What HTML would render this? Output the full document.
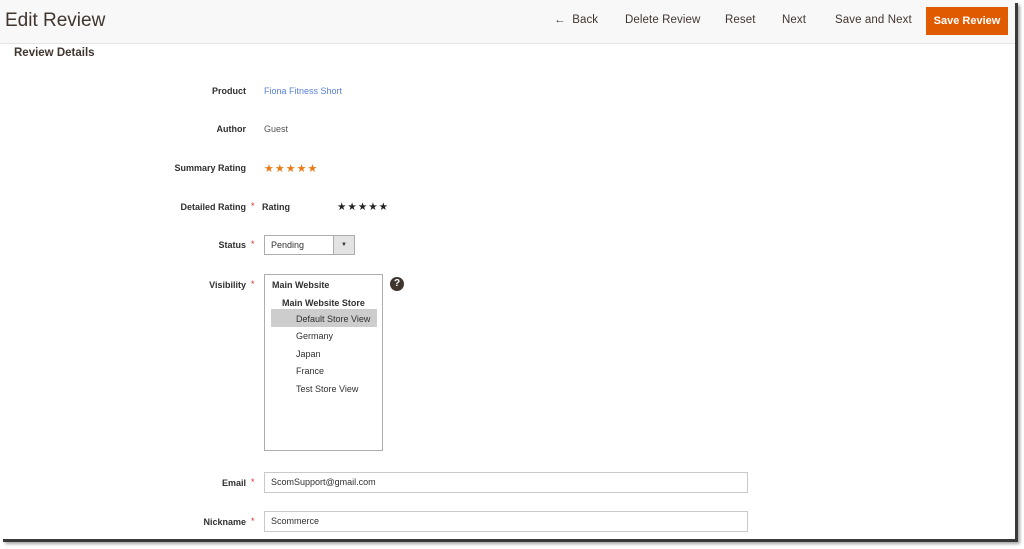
<!DOCTYPE html>
<html><head><meta charset="utf-8"><style>
*{margin:0;padding:0;box-sizing:border-box}
body{width:1024px;height:549px;background:#fff;font-family:"Liberation Sans",sans-serif;color:#303030;position:relative;overflow:hidden}
.frame{position:absolute;left:0;top:0;width:1015px;height:539px;background:#fff;box-shadow:3px 3px 0 #3a3a3a,5px 5px 3px rgba(0,0,0,.35)}
.hdr{position:absolute;left:0;top:0;width:1015px;height:44px;background:#f8f8f8;border-bottom:1px solid #e4e4e4}
.title{position:absolute;left:5px;top:10px;font-size:19px;color:#41362f}
.btn{position:absolute;top:14px;font-size:11.5px;color:#41362f;font-weight:normal;letter-spacing:.1px}
.save{position:absolute;left:926px;top:7px;width:82px;height:28px;background:#e05a00;color:#fff;font-size:11px;font-weight:bold;text-align:center;line-height:28px}
.sect{position:absolute;left:14px;top:47px;font-size:11.5px;font-weight:bold;color:#41362f}
.lbl{position:absolute;right:778px;font-size:9px;font-weight:bold;color:#303030;white-space:nowrap}
.req{position:absolute;left:251px;font-size:9px;color:#e02b27}
.val{position:absolute;left:264px;font-size:9px;color:#303030;white-space:nowrap}
.inp{position:absolute;left:264px;width:484px;height:21px;border:1px solid #c9c9c9;font-size:9px;line-height:19px;padding-left:6px}
.ms{position:absolute;left:264px;top:274px;width:119px;height:177px;border:1px solid #adadad}
.ms div{font-size:9px;position:absolute;white-space:nowrap}
</style></head><body>
<div class="frame"></div>
<div class="hdr"></div>
<div class="title">Edit Review</div>
<div class="btn" style="left:554px">&#8592;&nbsp; Back</div>
<div class="btn" style="left:625px">Delete Review</div>
<div class="btn" style="left:725px">Reset</div>
<div class="btn" style="left:782px">Next</div>
<div class="btn" style="left:835px">Save and Next</div>
<div class="save">Save Review</div>
<div class="sect">Review Details</div>

<div class="lbl" style="top:86px">Product</div>
<div class="val" style="top:86px;color:#5b83d8">Fiona Fitness Short</div>
<div class="lbl" style="top:124px">Author</div>
<div class="val" style="top:124px;color:#555">Guest</div>
<div class="lbl" style="top:163px">Summary Rating</div>
<div class="val" style="top:162px;color:#eb7b16;font-size:11px;letter-spacing:1px">★★★★★</div>
<div class="lbl" style="top:202px;right:778px">Detailed Rating</div>
<div class="req" style="top:201px">*</div>
<div class="val" style="top:202px;left:262px;font-weight:bold">Rating</div>
<div class="val" style="top:201px;left:337px;font-size:10.5px;letter-spacing:1px;color:#222">★★★★★</div>

<div class="lbl" style="top:240px">Status</div>
<div class="req" style="top:239px">*</div>
<div style="position:absolute;left:264px;top:235px;width:91px;height:20px;border:1px solid #adadad;font-size:9px;line-height:18px;padding-left:6px">Pending</div>
<div style="position:absolute;left:333px;top:236px;width:21px;height:18px;background:#e3e3e3;border-left:1px solid #adadad;font-size:6px;text-align:center;line-height:18px">▼</div>

<div class="lbl" style="top:280px">Visibility</div>
<div class="req" style="top:279px">*</div>
<div class="ms">
<div style="left:7px;top:5px;font-weight:bold">Main Website</div>
<div style="left:17px;top:23px;font-weight:bold">Main Website Store</div>
<div style="left:6px;top:34px;width:106px;height:18px;background:#cdcdcd"></div>
<div style="left:31px;top:39px">Default Store View</div>
<div style="left:31px;top:56px">Germany</div>
<div style="left:31px;top:74px">Japan</div>
<div style="left:31px;top:91px">France</div>
<div style="left:31px;top:109px">Test Store View</div>
</div>
<div style="position:absolute;left:390px;top:277px;width:14px;height:14px;border-radius:50%;background:#41362f;color:#fff;font-size:10px;font-weight:bold;text-align:center;line-height:14px">?</div>

<div class="lbl" style="top:478px">Email</div>
<div class="req" style="top:477px">*</div>
<div class="inp" style="top:472px">ScomSupport@gmail.com</div>
<div class="lbl" style="top:517px">Nickname</div>
<div class="req" style="top:516px">*</div>
<div class="inp" style="top:511px">Scommerce</div>
</body></html>
